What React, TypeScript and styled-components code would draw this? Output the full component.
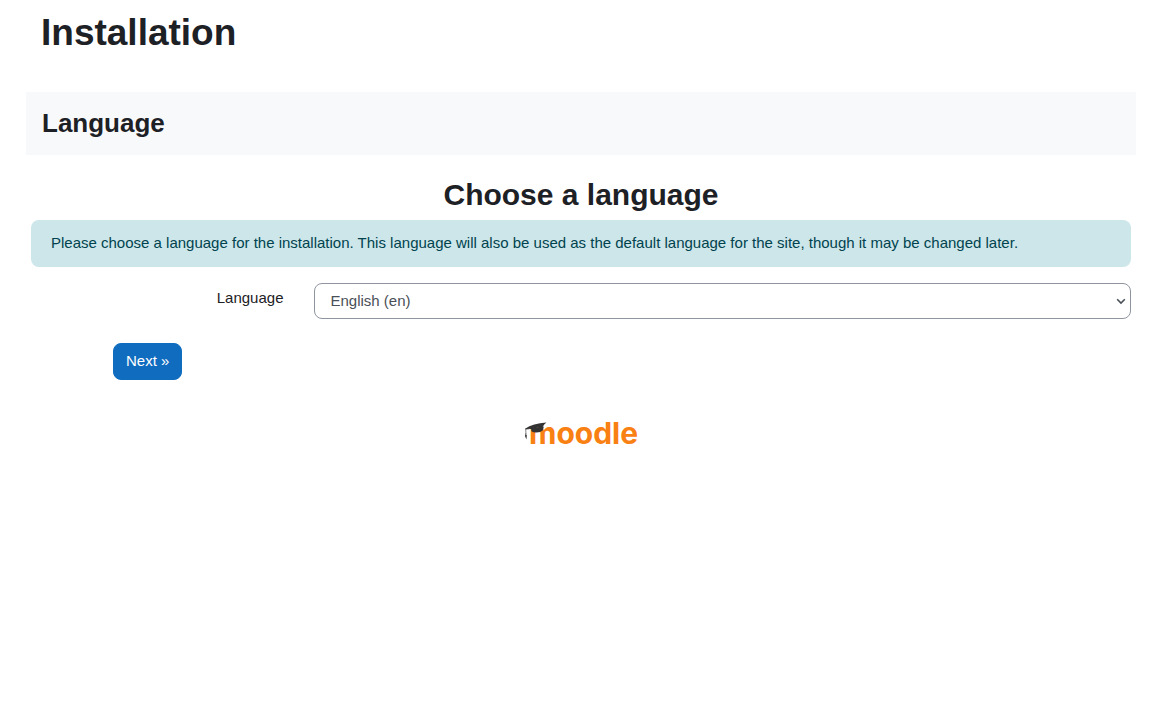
import React from 'react';
import styled, { createGlobalStyle } from 'styled-components';

const GlobalStyle = createGlobalStyle`
  *, *::before, *::after {
    box-sizing: border-box;
  }

  body {
    margin: 0;
    background: #fff;
    color: #1d2125;
    font-family: "Liberation Sans", Arial, sans-serif;
    font-size: 15px;
    line-height: 22px;
  }
`;

const Page = styled.div`
  padding: 10px 33px 24px 26px;
`;

const Header = styled.header`
  padding: 0 15px;
  margin-bottom: 37px;
`;

const SiteTitle = styled.h1`
  margin: 0;
  font-size: 37px;
  line-height: 45px;
`;

const StageBar = styled.div`
  padding: 16px;
  margin-bottom: 22px;
  background: #f8f9fb;
`;

const StageTitle = styled.h2`
  margin: 0;
  font-size: 26px;
  line-height: 31px;
`;

const Content = styled.main`
  padding: 0 5px;
`;

const SectionTitle = styled.h2`
  margin: 0 0 7px;
  font-size: 30px;
  line-height: 36px;
  text-align: center;
`;

const Notice = styled.div`
  padding: 12px 20px 13px;
  margin-bottom: 16px;
  border-radius: 8px;
  background: #cce6ea;
  color: #00434e;
`;

const FieldRow = styled.div`
  display: grid;
  grid-template-columns: 1fr 3fr;
  margin: 0 -15px 24px;
`;

const FieldLabel = styled.label`
  padding: 4px 15px;
  text-align: right;
`;

const FieldControl = styled.div`
  padding: 0 15px;
`;

const SelectFrame = styled.div`
  position: relative;
`;

const Select = styled.select`
  appearance: none;
  display: block;
  width: 100%;
  height: 36px;
  padding: 6px 16px;
  border: 1px solid #8f959e;
  border-radius: 8px;
  background: #fff;
  color: #495057;
  font: inherit;
`;

const Chevron = styled.svg`
  position: absolute;
  top: 15px;
  right: 5px;
  pointer-events: none;
`;

const Actions = styled.div`
  display: flex;
  padding: 0 82px;
`;

const PrimaryButton = styled.button`
  padding: 6px 12px 7px;
  border: 1px solid #0f6cbf;
  border-radius: 8px;
  background: #0f6cbf;
  color: #fff;
  font: inherit;
  cursor: pointer;
`;

const Footer = styled.footer`
  display: flex;
  justify-content: center;
  margin-top: 35px;
`;

const HomeLink = styled.a`
  display: block;

  svg {
    display: block;
    overflow: visible;
  }
`;

const Wordmark = styled.text`
  fill: #f98012;
  font-family: Inter, "Liberation Sans", sans-serif;
  font-size: 30px;
  font-weight: 700;
`;

function MoodleLogo() {
  return (
    <svg width="120" height="40" viewBox="-3 0 120 40" role="img" aria-label="Moodle">
      <Wordmark x="5" y="29">moodle</Wordmark>
      <path fill="#333" d="M7 13.2L19.8 11.5L18.9 15.3Q16.5 17.6 12.5 17.6Q9 17.6 7.4 16.2Z" />
      <path fill="#333" d="M1 13.7Q9 8.4 22.4 7.5Q20 9.2 18.6 12Q12.5 12.6 8.4 14.2Q6 13.2 1 14.3Z" />
      <path fill="none" stroke="#333" strokeWidth="0.6" d="M7.2 13.5L1.7 14.2L2 19" />
      <path fill="#333" d="M1.7 18L1 21L2.4 24.4L2.8 20.5Z" />
    </svg>
  );
}

export default function App() {
  return (
    <>
      <GlobalStyle />
      <Page>
        <Header>
          <SiteTitle>Installation</SiteTitle>
        </Header>
        <StageBar>
          <StageTitle>Language</StageTitle>
        </StageBar>
        <Content>
          <SectionTitle>Choose a language</SectionTitle>
          <Notice>
            Please choose a language for the installation. This language will also be used as the
            default language for the site, though it may be changed later.
          </Notice>
          <form onSubmit={(event) => event.preventDefault()}>
            <FieldRow>
              <FieldLabel htmlFor="language">Language</FieldLabel>
              <FieldControl>
                <SelectFrame>
                  <Select id="language" name="lang" defaultValue="en">
                    <option value="en">English (en)</option>
                  </Select>
                  <Chevron width="10" height="7" viewBox="0 0 10 7" aria-hidden="true">
                    <path d="M1.2 1.2L5 5L8.8 1.2" fill="none" stroke="#495057" strokeWidth="1.6" />
                  </Chevron>
                </SelectFrame>
              </FieldControl>
            </FieldRow>
            <Actions>
              <PrimaryButton type="submit">Next »</PrimaryButton>
            </Actions>
          </form>
        </Content>
        <Footer>
          <HomeLink href="https://moodle.org/">
            <MoodleLogo />
          </HomeLink>
        </Footer>
      </Page>
    </>
  );
}
